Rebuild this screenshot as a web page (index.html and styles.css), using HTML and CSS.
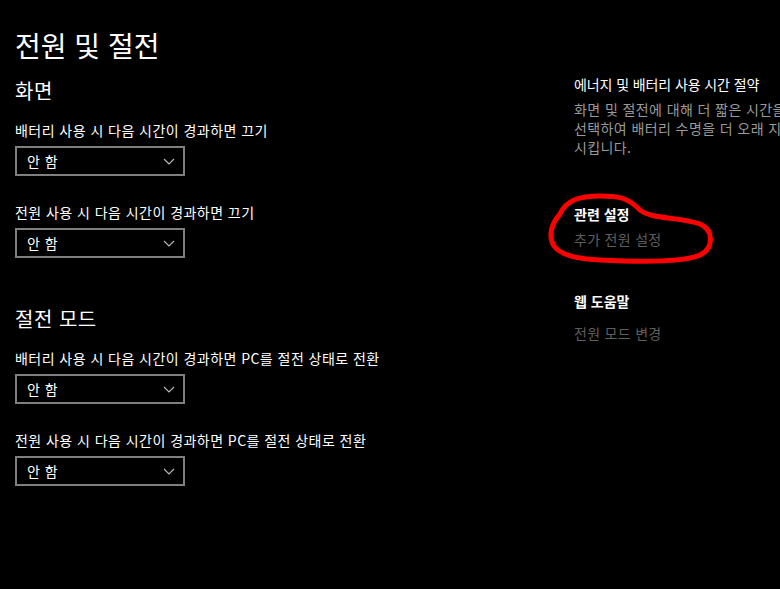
FILE: index.html
```html
<!DOCTYPE html>
<html lang="ko">
<head>
<meta charset="utf-8">
<title>전원 및 절전</title>
<link rel="stylesheet" href="styles.css">
</head>
<body>
<div class="page">
  <main class="main">
    <h1 class="title">전원 및 절전</h1>

    <section class="group">
      <h2 class="group-title">화면</h2>
      <div class="field">
        <div class="label">배터리 사용 시 다음 시간이 경과하면 끄기</div>
        <div class="select"><span>안 함</span><svg class="chev" width="12" height="7" viewBox="0 0 12 7"><polyline points="1,1 6,6 11,1" fill="none" stroke="#b8b8b8" stroke-width="1.2"/></svg></div>
      </div>
      <div class="field">
        <div class="label">전원 사용 시 다음 시간이 경과하면 끄기</div>
        <div class="select"><span>안 함</span><svg class="chev" width="12" height="7" viewBox="0 0 12 7"><polyline points="1,1 6,6 11,1" fill="none" stroke="#b8b8b8" stroke-width="1.2"/></svg></div>
      </div>
    </section>

    <section class="group group-second">
      <h2 class="group-title">절전 모드</h2>
      <div class="field">
        <div class="label">배터리 사용 시 다음 시간이 경과하면 PC를 절전 상태로 전환</div>
        <div class="select"><span>안 함</span><svg class="chev" width="12" height="7" viewBox="0 0 12 7"><polyline points="1,1 6,6 11,1" fill="none" stroke="#b8b8b8" stroke-width="1.2"/></svg></div>
      </div>
      <div class="field">
        <div class="label">전원 사용 시 다음 시간이 경과하면 PC를 절전 상태로 전환</div>
        <div class="select"><span>안 함</span><svg class="chev" width="12" height="7" viewBox="0 0 12 7"><polyline points="1,1 6,6 11,1" fill="none" stroke="#b8b8b8" stroke-width="1.2"/></svg></div>
      </div>
    </section>
  </main>

  <aside class="aside">
    <div class="info">
      <div class="aside-title">에너지 및 배터리 사용 시간 절약</div>
      <p class="desc">화면 및 절전에 대해 더 짧은 시간을<br>선택하여 배터리 수명을 더 오래 지속<br>시킵니다.</p>
    </div>
    <div class="related">
      <div class="aside-head">관련 설정</div>
      <div class="link">추가 전원 설정</div>
    </div>
    <div class="help">
      <div class="aside-head">웹 도움말</div>
      <div class="link">전원 모드 변경</div>
    </div>
  </aside>

  <svg class="marker" width="780" height="589" viewBox="0 0 780 589">
    <path d="M 560 214 C 566 200, 580 196, 600 196 C 620 196, 628 198, 640 210 C 650 219, 680 217, 700 224 C 714 230, 714 248, 700 255 C 685 262, 640 262, 600 260 C 575 259, 556 254, 552 242 C 549 232, 553 222, 560 214 Z" fill="none" stroke="#ff0000" stroke-width="5" stroke-linejoin="round"/>
  </svg>
</div>
</body>
</html>
```

FILE: styles.css
```css
html, body {
  margin: 0;
  padding: 0;
  background: #000;
  overflow: hidden;
}

body {
  width: 780px;
  height: 589px;
  font-family: "Noto Sans CJK KR", "Noto Sans", sans-serif;
  color: #fff;
}

.page {
  position: relative;
  display: flex;
  width: 780px;
  height: 589px;
}

.main {
  width: 558px;
  padding-left: 15px;
  padding-top: 27px;
  box-sizing: border-box;
}

.title {
  margin: 0;
  font-size: 28px;
  line-height: 36px;
  font-weight: 400;
  letter-spacing: 0;
}

.group {
  margin-top: 14px;
}

.group-second {
  margin-top: 47px;
}

.group-title {
  margin: 0 0 15px;
  font-size: 20px;
  line-height: 28px;
  font-weight: 400;
  letter-spacing: 0.5px;
}

.field + .field {
  margin-top: 26px;
}

.label {
  font-size: 14px;
  line-height: 20px;
  letter-spacing: 0.45px;
}

.select {
  margin-top: 6px;
  width: 170px;
  height: 30px;
  box-sizing: border-box;
  border: 2px solid #7f7f7f;
  display: flex;
  align-items: center;
  justify-content: space-between;
  padding: 0 8px 0 10px;
  font-size: 14px;
  letter-spacing: 0.5px;
}

.chev {
  display: block;
  margin-top: 1px;
}

.aside {
  width: 222px;
  padding-left: 16px;
  padding-top: 74px;
  box-sizing: border-box;
  flex-shrink: 0;
  white-space: nowrap;
}

.aside-title {
  font-size: 14px;
  line-height: 20px;
  letter-spacing: -0.1px;
}

.desc {
  margin: 6px 0 0;
  font-size: 14px;
  line-height: 19px;
  color: #9a9a9a;
  letter-spacing: 0.4px;
}

.related {
  margin-top: 47px;
}

.aside-head {
  font-size: 14px;
  line-height: 20px;
  font-weight: 700;
}

.link {
  margin-top: 5px;
  font-size: 14px;
  line-height: 20px;
  color: #5f5f5f;
  letter-spacing: 0.3px;
}

.help {
  margin-top: 42px;
}

.help .link {
  margin-top: 12px;
}

.marker {
  position: absolute;
  left: 0;
  top: 0;
  pointer-events: none;
}
```
